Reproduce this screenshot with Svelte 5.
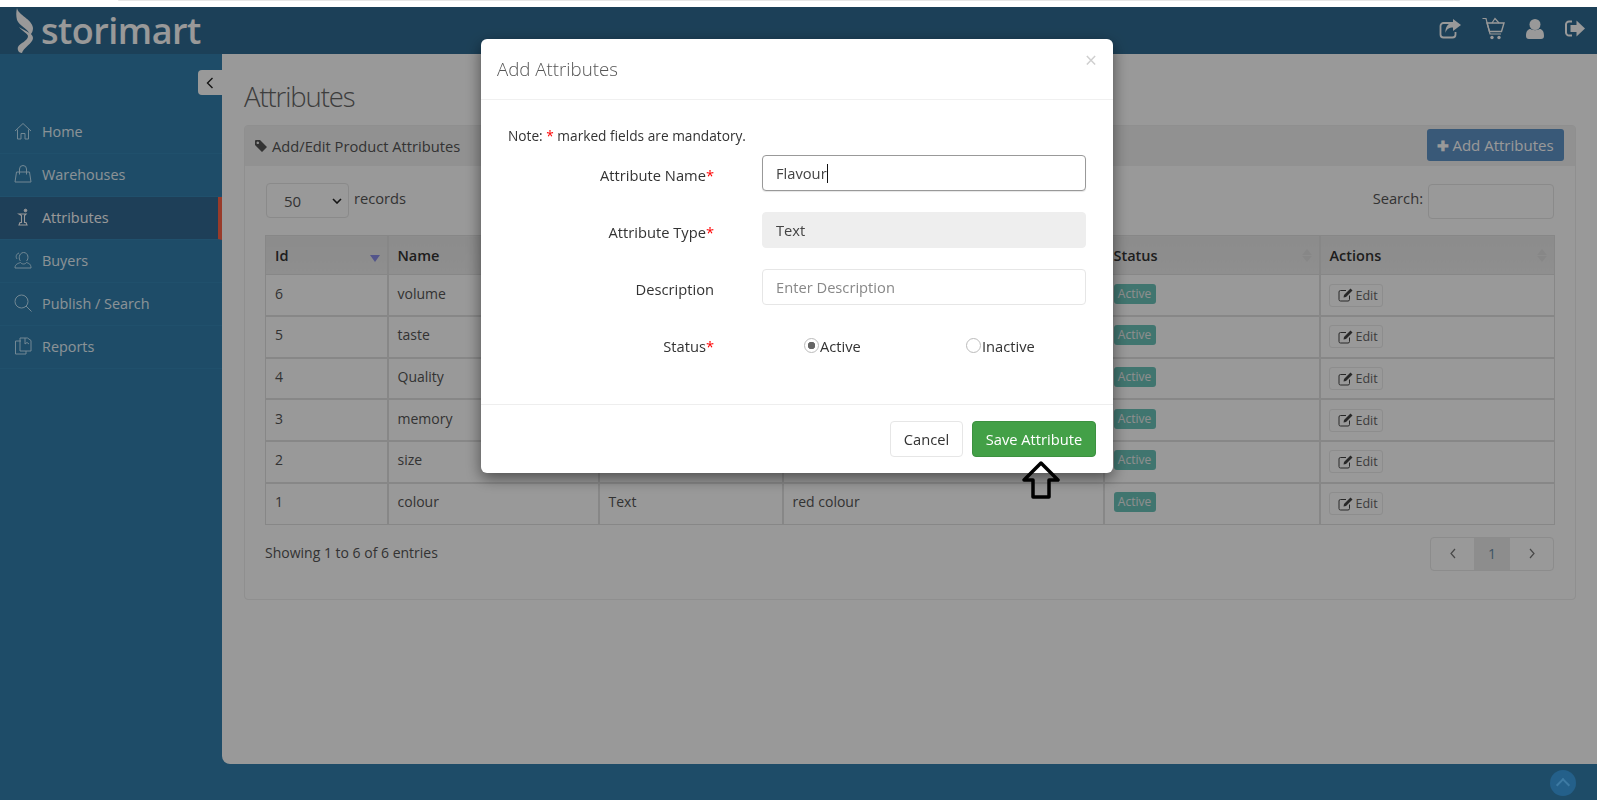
<script>
  const nav = [
    { id: 'home', label: 'Home' },
    { id: 'bag', label: 'Warehouses' },
    { id: 'attr', label: 'Attributes', active: true },
    { id: 'buyers', label: 'Buyers' },
    { id: 'search', label: 'Publish / Search' },
    { id: 'reports', label: 'Reports' },
  ];

  const rows = [
    { id: 6, name: 'volume', desc: 'volume' },
    { id: 5, name: 'taste', desc: 'taste' },
    { id: 4, name: 'Quality', desc: 'quality' },
    { id: 3, name: 'memory', desc: 'memory' },
    { id: 2, name: 'size', desc: 'size' },
    { id: 1, name: 'colour', desc: 'red colour' },
  ];

  const columns = ['Name', 'Type', 'Description', 'Status', 'Actions'];
</script>

<div class="page">
  <div class="topstrip"><span></span></div>

  <header class="topbar">
    <div class="logo">
      <svg width="20" height="47" viewBox="0 0 20 47">
        <path d="M2 1C3 8 17 12 18 21C18 24 17 26 15 28C14 22 4 19 2 13C1 9 1 5 2 1Z" fill="#fff" />
        <path d="M4 20C10 24 18 26 18 31C18 36 8 41 7 46C4 46 2 43 3 40C5 36 13 34 13 29C13 27 7 24 4 20Z" fill="#fff" />
      </svg>
      <span>storimart</span>
    </div>
    <div class="top-icons">
      <svg width="22" height="20" viewBox="0 0 22 20">
        <path d="M14 4H4.500A3 3 0 0 0 1.500 7V15.500A3 3 0 0 0 4.500 18.500H13.500A3 3 0 0 0 16.500 15.500V13" fill="none" stroke="#fff" stroke-width="1.800" />
        <path d="M14 0L22 6L14 12V8.500C10 8.500 7.500 10 6.500 14C6 8 9 4 14 3.500Z" fill="#fff" />
      </svg>
      <svg width="23" height="23" viewBox="0 0 23 23">
        <path d="M0.500 1.500H4L8 17H19" fill="none" stroke="#fff" stroke-width="1.200" />
        <path d="M5 6H22L19.500 14.500H7.500Z" fill="none" stroke="#fff" stroke-width="1.400" />
        <path d="M10 6L13 1.500L17 6" fill="none" stroke="#fff" stroke-width="1.200" />
        <circle cx="10" cy="20.500" r="1.700" fill="#fff" />
        <circle cx="17" cy="20.500" r="1.700" fill="#fff" />
      </svg>
      <svg width="18" height="20" viewBox="0 0 18 20">
        <circle cx="9" cy="5.500" r="5.500" fill="#fff" />
        <path d="M0 17C0 12 2 10 4.500 10C6 11.500 12 11.500 13.500 10C16 10 18 12 18 17C18 19 17 20 15 20H3C1 20 0 19 0 17Z" fill="#fff" />
      </svg>
      <svg width="20" height="17" viewBox="0 0 20 17">
        <path d="M7 1.500H4A3 3 0 0 0 1 4.500V12.500A3 3 0 0 0 4 15.500H7" fill="none" stroke="#fff" stroke-width="2" />
        <path d="M11.500 0.500L20 8.500L11.500 16.500V12H5.500V5H11.500Z" fill="#fff" />
      </svg>
    </div>
  </header>

  <div class="layout">
    <aside class="sidebar">
      <button class="collapse" aria-label="Collapse">
        <svg width="8" height="12" viewBox="0 0 8 12"><path d="M6.500 1L1.500 6L6.500 11" fill="none" stroke="#222" stroke-width="1.400" /></svg>
      </button>
      <nav>
        {#each nav as item}
          <div class="nav-item" class:active={item.active}>
            <svg class="nav-icon" width="18" height="18" viewBox="0 0 18 18" fill="none" stroke="#bfe3f7" stroke-width="1">
              {#if item.id === 'home'}
                <path d="M1 9L9 1.500L17 9M3.500 7.500V17H7V11.500H11V17H14.500V7.500" />
              {:else if item.id === 'bag'}
                <path d="M2.500 7H15.500L17 17H1ZM5.500 9.500V4A3.500 3.500 0 0 1 12.500 4V9.500" />
              {:else if item.id === 'attr'}
                <g stroke="#fff">
                  <circle cx="11.500" cy="2.500" r="1.300" fill="#fff" />
                  <path d="M5 6H12L10.500 7.500V14.500H12L13 17H5L6 14.500H7.500V7.500Z" stroke-width="1.100" />
                </g>
              {:else if item.id === 'buyers'}
                <path d="M6.500 10C4.500 8.500 4.500 2 9.500 1.500C14.500 1.500 15 8 12.500 10M1 17C1 13 4 12.500 6.500 11.500C8 13.500 11 13.500 12.500 11.500C15 12.500 17 13 17 17Z" />
                <path d="M3 8C1.500 6 2 3 5 2" />
              {:else if item.id === 'search'}
                <circle cx="7.500" cy="7.500" r="6.500" />
                <path d="M12 12L17.500 17.500" />
              {:else}
                <path d="M7 4H1.500V17H12V14M6 4V14H17V3.500L13.500 1H6Z" />
                <path d="M11 1V7L13 5.500L15 7" />
              {/if}
            </svg>
            <span>{item.label}</span>
          </div>
        {/each}
      </nav>
    </aside>

    <main class="main">
      <h1>Attributes</h1>
      <section class="panel">
        <div class="panel-head">
          <div class="panel-title">
            <svg width="12" height="12" viewBox="0 0 12 12"><path d="M0 1.200C0 .5 .5 0 1.200 0H5L12 7L7 12L0 5ZM2.800 1.500A1.300 1.300 0 1 0 2.810 1.500Z" fill="#555" fill-rule="evenodd" /></svg>
            <span>Add/Edit Product Attributes</span>
          </div>
          <button class="add-btn"><b>✚</b>Add Attributes</button>
        </div>
        <div class="panel-body">
          <div class="tools">
            <div class="length">
              <div class="fake-select">50
                <svg width="10" height="6" viewBox="0 0 10 6"><path d="M1 1L5 5L9 1" fill="none" stroke="#222" stroke-width="1.600" /></svg>
              </div>
              <span>records</span>
            </div>
            <div class="search">
              <span>Search:</span>
              <div class="search-box"></div>
            </div>
          </div>

          <table>
            <colgroup>
              <col style="width:122px" /><col style="width:211px" /><col style="width:184px" /><col style="width:321px" /><col style="width:216px" /><col style="width:235px" />
            </colgroup>
            <thead>
              <tr>
                <th>Id<i class="sorted"></i></th>
                {#each columns as c}
                  <th>{c}<i class="sort"></i></th>
                {/each}
              </tr>
            </thead>
            <tbody>
              {#each rows as r}
                <tr>
                  <td>{r.id}</td>
                  <td>{r.name}</td>
                  <td>Text</td>
                  <td>{r.desc}</td>
                  <td><span class="badge">Active</span></td>
                  <td>
                    <span class="edit">
                      <svg width="15" height="14" viewBox="0 0 15 14">
                        <path d="M8 2.500H2.500A1.500 1.500 0 0 0 1 4V11.500A1.500 1.500 0 0 0 2.500 13H10A1.500 1.500 0 0 0 11.500 11.500V7.500" fill="none" stroke="#444" stroke-width="1" />
                        <path d="M12.500 0.500L14.500 2.500L8 9L5.500 9.500L6 7Z" fill="#444" />
                      </svg>
                      Edit
                    </span>
                  </td>
                </tr>
              {/each}
            </tbody>
          </table>

          <div class="table-foot">
            <span>Showing 1 to 6 of 6 entries</span>
            <div class="pager">
              <span>
                <svg width="8" height="11" viewBox="0 0 8 11"><path d="M6 1L2 5.500L6 10" fill="none" stroke="#777" stroke-width="1.200" /></svg>
              </span>
              <span class="current">1</span>
              <span>
                <svg width="8" height="11" viewBox="0 0 8 11"><path d="M2 1L6 5.500L2 10" fill="none" stroke="#777" stroke-width="1.200" /></svg>
              </span>
            </div>
          </div>
        </div>
      </section>
    </main>
  </div>

  <footer class="footer"></footer>
</div>

<div class="backdrop">
  <div class="totop"></div>
</div>

<div class="modal">
  <div class="modal-head">
    <h2>Add Attributes</h2>
    <span class="close">×</span>
  </div>
  <div class="modal-body">
    <p class="note">Note: <em>*</em> marked fields are mandatory.</p>
    <div class="field">
      <label for="attr-name">Attribute Name<em>*</em></label>
      <div class="control">
        <input id="attr-name" class="focused" value="Flavour" />
        <span class="caret"></span>
      </div>
    </div>
    <div class="field">
      <label for="attr-type">Attribute Type<em>*</em></label>
      <div class="control"><input id="attr-type" class="readonly" value="Text" readonly /></div>
    </div>
    <div class="field">
      <label for="attr-desc">Description</label>
      <div class="control"><input id="attr-desc" placeholder="Enter Description" /></div>
    </div>
    <div class="field status">
      <label for="st-active">Status<em>*</em></label>
      <div class="radios">
        <span class="radio"><input id="st-active" type="radio" name="st" checked />Active</span>
        <span class="radio"><input type="radio" name="st" />Inactive</span>
      </div>
    </div>
  </div>
  <div class="modal-foot">
    <button class="cancel">Cancel</button>
    <button class="save">Save Attribute</button>
  </div>
</div>

<svg class="pointer" width="40" height="38" viewBox="0 0 40 38">
  <path d="M20 2L37 19H28V36H12V19H3Z" fill="none" stroke="#000" stroke-width="3.500" stroke-linejoin="round" />
</svg>

<style>
  :global(body) {
    margin: 0;
    background: #fff;
    font-family: "Open Sans", sans-serif;
    overflow: hidden;
  }

  .page {
    width: 1597px;
    height: 800px;
    display: flex;
    flex-direction: column;
    color: #555;
    font-size: 14px;
  }

  .topstrip {
    height: 7px;
    flex: none;
    padding-left: 118px;
  }

  .topstrip span {
    display: block;
    width: 1342px;
    height: 1px;
    background: #e6e6e6;
    border-radius: 0 0 4px 4px;
  }

  .topbar {
    height: 47px;
    flex: none;
    background: #306c93;
    display: flex;
    justify-content: space-between;
    align-items: center;
    padding: 0 12px 0 15px;
  }

  .logo {
    display: flex;
    align-items: center;
    gap: 6px;
    color: #fff;
    font-size: 36px;
    font-weight: 600;
    letter-spacing: -0.5px;
  }

  .logo span {
    margin-top: -1px;
  }

  .top-icons {
    display: flex;
    align-items: center;
    gap: 21px;
    margin-top: -4px;
  }

  .layout {
    flex: 1;
    display: flex;
    min-height: 0;
    background: #327fad;
  }

  .sidebar {
    width: 222px;
    flex: none;
    display: flex;
    flex-direction: column;
  }

  .collapse {
    align-self: flex-end;
    margin-top: 16px;
    width: 24px;
    height: 25px;
    padding: 0;
    border: none;
    border-radius: 4px 0 0 4px;
    background: #fff;
    display: flex;
    align-items: center;
    justify-content: center;
  }

  nav {
    margin-top: 16px;
  }

  .nav-item {
    height: 43px;
    box-sizing: border-box;
    display: flex;
    align-items: center;
    gap: 10px;
    padding: 0 0 2px 14px;
    color: #e8f4fb;
    font-size: 14.400px;
    border-bottom: 1px solid #3685b4;
  }

  .nav-item.active {
    background: #336993;
    border-right: 4px solid #ff6347;
    color: #fff;
  }

  .nav-icon {
    flex: none;
  }

  .main {
    flex: 1;
    background: #fff;
    border-radius: 0 0 0 8px;
    padding: 0 21px 0 22px;
    min-width: 0;
  }

  h1 {
    margin: 24px 0 10px;
    font-size: 27.500px;
    line-height: 37px;
    font-weight: 300;
    color: #666;
    letter-spacing: -1.100px;
  }

  .panel {
    border: 1px solid #eee;
    border-radius: 4px;
    height: 475px;
    box-sizing: border-box;
  }

  .panel-head {
    height: 40px;
    background: #f2f2f2;
    display: flex;
    justify-content: space-between;
    align-items: center;
    padding: 0 11px 0 10px;
  }

  .panel-title {
    display: flex;
    align-items: center;
    gap: 5px;
    font-size: 14.700px;
  }

  .add-btn {
    height: 32px;
    width: 137px;
    padding: 0;
    margin-top: -2px;
    border: none;
    border-radius: 3px;
    background: #5f94c8;
    color: #fff;
    font: 15px "Open Sans", sans-serif;
  }

  .add-btn b {
    font-size: 14px;
    margin-right: 3px;
  }

  .panel-body {
    padding: 17px 21px 0 20px;
  }

  .tools {
    display: flex;
    justify-content: space-between;
    height: 52px;
    margin-left: 1px;
  }

  .length, .search {
    display: flex;
    align-items: flex-start;
    gap: 5px;
  }

  .length span, .search span {
    line-height: 30px;
    font-size: 14.700px;
  }

  .fake-select {
    width: 83px;
    height: 35px;
    box-sizing: border-box;
    border: 1px solid #e6e6e6;
    border-radius: 4px;
    padding-left: 17px;
    display: flex;
    align-items: center;
    justify-content: space-between;
    padding-right: 6px;
    font-size: 15px;
  }

  .search-box {
    width: 126px;
    height: 35px;
    box-sizing: border-box;
    border: 1px solid #e6e6e6;
    border-radius: 4px;
    margin-top: 1px;
  }

  table {
    width: 1289px;
    table-layout: fixed;
    border-collapse: collapse;
    font-size: 14px;
  }

  th {
    height: 39px;
    box-sizing: border-box;
    background: linear-gradient(#e9e9e9, #eee);
    border: 1px solid #e2e2e2;
    border-right-width: 2px;
    text-align: left;
    padding: 0 9px;
    font-weight: 600;
    color: #333;
    font-size: 14.500px;
    position: relative;
  }

  td {
    height: 41.670px;
    box-sizing: border-box;
    border: 1px solid #e2e2e2;
    border-bottom-width: 2px;
    border-right-width: 2px;
    padding: 0 9px 4px;
    vertical-align: middle;
  }

  th:last-child, td:last-child {
    border-right-width: 1px;
  }

  tr:last-child td {
    border-bottom-width: 1px;
  }

  .sorted {
    position: absolute;
    right: 7px;
    top: 19px;
    border: 5px solid transparent;
    border-bottom: none;
    border-top: 7px solid #8a8ee8;
  }

  .sort {
    position: absolute;
    right: 7px;
    top: 13px;
    width: 0;
    border: 5px solid transparent;
    border-bottom: 6px solid #e2e2e2;
    border-top: none;
  }

  .sort::after {
    content: "";
    position: absolute;
    left: -5px;
    top: 7px;
    border: 5px solid transparent;
    border-top: 6px solid #e2e2e2;
    border-bottom: none;
  }

  .badge {
    display: inline-block;
    width: 42px;
    height: 20px;
    line-height: 20px;
    text-align: center;
    border-radius: 3px;
    background: #6cc4ba;
    color: #eee;
    font-size: 12px;
  }

  .edit {
    display: inline-flex;
    align-items: center;
    gap: 3px;
    height: 23px;
    width: 54px;
    box-sizing: border-box;
    border: 1px solid #ececec;
    border-radius: 3px;
    padding-left: 8px;
    font-size: 12.500px;
    color: #666;
    margin: 4px 0 0 -1px;
  }

  .table-foot {
    display: flex;
    justify-content: space-between;
    margin-top: 12px;
    width: 1289px;
  }

  .table-foot > span {
    line-height: 32px;
    font-size: 14px;
  }

  .pager {
    display: flex;
    height: 34px;
    box-sizing: border-box;
    border: 1px solid #e9e9e9;
    border-radius: 4px;
  }

  .pager span {
    width: 43px;
    display: flex;
    align-items: center;
    justify-content: center;
  }

  .pager .current {
    width: 36px;
    background: #ececec;
    color: #6a8da8;
  }

  .footer {
    height: 36px;
    flex: none;
    background: #327fad;
  }

  .backdrop {
    position: fixed;
    inset: 7px 3px 0 0;
    background: rgba(0, 0, 0, 0.4);
  }

  .totop {
    position: absolute;
    right: 21px;
    bottom: 4px;
    width: 26px;
    height: 26px;
    border-radius: 50%;
    background: #24608a;
  }

  .totop::after {
    content: "";
    position: absolute;
    left: 8px;
    top: 10px;
    width: 8px;
    height: 8px;
    border-left: 2px solid #3d7aa3;
    border-top: 2px solid #3d7aa3;
    transform: rotate(45deg);
  }

  .modal {
    position: fixed;
    left: 481px;
    top: 39px;
    width: 632px;
    height: 434px;
    background: #fff;
    border-radius: 6px;
    box-shadow: 0 5px 15px rgba(0, 0, 0, 0.5);
    display: flex;
    flex-direction: column;
    color: #333;
    font-size: 14.700px;
  }

  .modal-head {
    height: 61px;
    flex: none;
    box-sizing: border-box;
    border-bottom: 1px solid #f0f0f0;
    display: flex;
    justify-content: space-between;
    padding: 0 16px;
  }

  h2 {
    margin: 17px 0 0;
    font-size: 18.700px;
    line-height: 25px;
    font-weight: 300;
    color: #555;
  }

  .close {
    font-size: 21px;
    color: #cfcfcf;
    line-height: 24px;
    margin-top: 9px;
  }

  .modal-body {
    flex: 1;
    padding: 26px 27px 0;
  }

  .note {
    margin: 0 0 10px;
    font-size: 13.700px;
    line-height: 19px;
  }

  em {
    font-style: normal;
    color: #f00;
  }

  .field {
    display: flex;
    align-items: center;
    height: 36px;
    margin-bottom: 21px;
  }

  label {
    width: 206px;
    text-align: right;
    flex: none;
    padding-top: 3px;
  }

  .control {
    margin-left: 48px;
    position: relative;
  }

  input:not([type]) {
    width: 324px;
    height: 36px;
    box-sizing: border-box;
    border: 1px solid #e6e6e6;
    border-radius: 4px;
    padding: 0 13px;
    font: 14.700px "Open Sans", sans-serif;
    color: #444;
    outline: none;
    display: block;
  }

  input::placeholder {
    color: #888;
  }

  .focused {
    border-color: #999 !important;
    box-shadow: 0 1px 1px rgba(0, 0, 0, 0.1);
  }

  .readonly {
    background: #eee;
    border-color: #eee !important;
  }

  .caret {
    position: absolute;
    left: 65px;
    top: 9px;
    width: 1px;
    height: 19px;
    background: #111;
  }

  .radios {
    display: flex;
    margin-left: 90px;
    padding-top: 3px;
  }

  .radio {
    display: flex;
    align-items: center;
    width: 162px;
  }

  input[type="radio"] {
    appearance: none;
    width: 15px;
    height: 15px;
    margin: 0 1px 0 0;
    border: 1px solid #bbb;
    border-radius: 50%;
    background: #fff;
  }

  input[type="radio"]:checked {
    background: radial-gradient(circle, #666 0 3.500px, #fff 4px);
  }

  .modal-foot {
    height: 69px;
    flex: none;
    box-sizing: border-box;
    border-top: 1px solid #eee;
    display: flex;
    justify-content: flex-end;
    align-items: flex-start;
    gap: 9px;
    padding: 16px 17px 0 0;
  }

  .modal-foot button {
    height: 36px;
    border-radius: 4px;
    font: 14.700px "Open Sans", sans-serif;
    padding: 0;
  }

  .cancel {
    width: 73px;
    background: #fff;
    border: 1px solid #e6e6e6;
    color: #333;
  }

  .save {
    width: 124px;
    background: #43a047;
    border: 1px solid #3c9140;
    color: #fff;
  }

  .pointer {
    position: fixed;
    left: 1021px;
    top: 461px;
  }
</style>
